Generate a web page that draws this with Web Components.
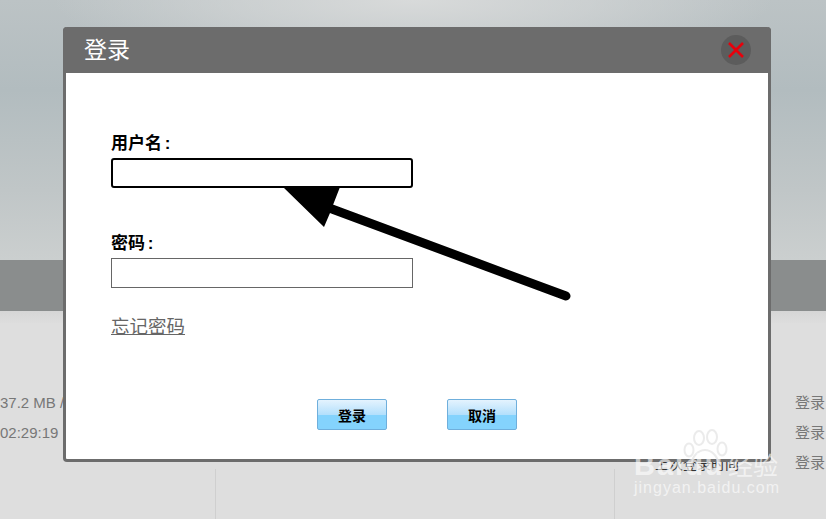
<!DOCTYPE html>
<html>
<head>
<meta charset="utf-8">
<title>登录</title>
<style>
  html, body { margin: 0; height: 100%; overflow: hidden; }
  body { font-family: "Liberation Sans", "Noto Sans CJK SC", sans-serif; }
</style>
</head>
<body>
<status-page>
  <login-dialog heading="登录"></login-dialog>
  <pointer-arrow></pointer-arrow>
  <baidu-mark></baidu-mark>
</status-page>

<template id="status-page-tpl">
  <style>
    :host { display: block; position: relative; width: 826px; height: 519px; overflow: hidden; background: #dedede; }
    .top { height: 260px; background: radial-gradient(ellipse 360px 70px at 50% 0, #d8dada 0%, rgba(216,218,218,.55) 50%, rgba(216,218,218,0) 100%), linear-gradient(#bcc3c5 0, #b2bcbf 90px, #c0c6c7 190px, #cbcfcf 260px); }
    .band { height: 51px; background: #8a8d8d; }
    .fade { height: 12px; background: linear-gradient(#d6d6d6, #dddddd); }
    .rows { display: grid; grid-template-columns: 215px 399px 1fr; height: 146px; font-size: 15px; color: #777; }
    .rows > div { display: flex; flex-direction: column; gap: 14px; padding-top: 72px; }
    .rows span { line-height: 16px; white-space: nowrap; }
    .right { padding-left: 181px; }
    .cols { display: grid; grid-template-columns: 215px 399px 1fr; height: 60px; }
    .cols div + div { border-left: 1px solid #cfcfcf; }
    .clip { position: absolute; left: 655px; top: 453px; font-size: 14px; color: #333; white-space: nowrap; }
  </style>
  <div class="top"></div>
  <div class="band"></div>
  <div class="fade"></div>
  <div class="rows">
    <div><span>37.2 MB / 128 MB</span><span>02:29:19</span></div>
    <div></div>
    <div class="right"><span>登录</span><span>登录</span><span>登录</span></div>
  </div>
  <div class="cols"><div></div><div></div><div></div></div>
  <div class="clip">上次登录时间</div>
  <slot></slot>
</template>

<template id="login-dialog-tpl">
  <style>
    :host { display: block; position: absolute; left: 63px; top: 27px; width: 708px; height: 435px; box-sizing: border-box; background: #fff; border: 3px solid #6c6c6c; border-top: 0; border-radius: 4px; }
    header { display: flex; align-items: center; justify-content: space-between; height: 46px; margin: 0 -3px; padding: 0 20px 0 21px; background: #6c6c6c; border-radius: 4px 4px 0 0; color: #fff; font-size: 23px; }
    header span { line-height: 30px; margin-top: -1px; }
    .close { width: 30px; height: 30px; border-radius: 50%; background: #5c5c5c; display: flex; align-items: center; justify-content: center; }
    main { display: flex; flex-direction: column; padding: 59px 0 0 45px; }
    label { font-size: 17px; font-weight: bold; word-spacing: -2px; color: #000; line-height: 24px; height: 26px; }
    .box { display: block; width: 302px; height: 30px; box-sizing: border-box; margin-bottom: 29px; background: #fff; border: 1px solid #666; }
    .box.focus { border: 2px solid #000; border-radius: 3px; margin-bottom: 44px; }
    a { font-size: 18.5px; color: #666; text-decoration: underline; line-height: 24px; margin-top: -2px; align-self: flex-start; }
    footer { display: flex; justify-content: center; gap: 60px; margin: 60px 0 0 -45px; }
  </style>
  <header><span></span><div class="close">
    <svg width="18" height="18" viewBox="0 0 18 18"><path d="M2 2 16 16M16 2 2 16" stroke="#e8000b" stroke-width="2.6" fill="none"/></svg>
  </div></header>
  <main>
    <label>用户名 :</label>
    <div class="box focus"></div>
    <label>密码 :</label>
    <div class="box"></div>
    <a href="#">忘记密码</a>
    <footer>
      <blue-button>登录</blue-button>
      <blue-button>取消</blue-button>
    </footer>
  </main>
</template>

<template id="blue-button-tpl">
  <style>
    :host { display: inline-flex; align-items: center; justify-content: center; box-sizing: border-box; width: 70px; height: 31px; border: 1px solid #6fafdc; border-radius: 2px; background: linear-gradient(#e4f3fe 0%, #b4e0fc 50%, #84d3fd 52%, #84d3fd 100%); font-size: 14px; font-weight: bold; color: #000; }
  </style>
  <slot></slot>
</template>

<template id="pointer-arrow-tpl">
  <style>
    :host { display: block; position: absolute; left: 0; top: 0; width: 826px; height: 519px; pointer-events: none; }
    svg { display: block; }
  </style>
  <svg width="826" height="519" viewBox="0 0 826 519">
    <path d="M566 296 L332 209" stroke="#000" stroke-width="9" stroke-linecap="round" fill="none"/>
    <path d="M283 187 L340 187 L333 205 L330 213 L324 227 Z" fill="#000"/>
  </svg>
</template>

<template id="baidu-mark-tpl">
  <style>
    :host { display: block; position: absolute; left: 634px; top: 428px; width: 150px; height: 75px; color: rgba(255,255,255,.62); pointer-events: none; }
    svg { position: absolute; left: 48px; top: 0; color: rgba(222,222,222,.6); }
    .logo { position: absolute; left: 0; top: 21px; font-size: 29px; font-weight: bold; letter-spacing: 2px; line-height: 33px; }
    .cn { position: absolute; left: 94px; top: 23px; font-size: 25px; line-height: 30px; }
    .url { position: absolute; left: 0; top: 50px; font-size: 16px; letter-spacing: 1px; line-height: 20px; white-space: nowrap; }
  </style>
  <svg width="50" height="50" viewBox="0 0 50 50" fill="none" stroke="currentColor" stroke-width="2">
    <ellipse cx="17" cy="10" rx="5" ry="7"/>
    <ellipse cx="30" cy="9" rx="5" ry="7"/>
    <ellipse cx="7" cy="22" rx="4.5" ry="6.5"/>
    <ellipse cx="40" cy="21" rx="4.5" ry="6.5"/>
    <path d="M23 22c-7 0-13 7-13 13 0 7 8 6 13 5 6 1 13 2 13-5 0-6-6-13-13-13z"/>
  </svg>
  <div class="logo">Baidu</div>
  <div class="cn">经验</div>
  <div class="url">jingyan.baidu.com</div>
</template>

<script>
class StatusPage extends HTMLElement {
  constructor() {
    super();
    this.attachShadow({ mode: 'open' }).appendChild(document.getElementById('status-page-tpl').content.cloneNode(true));
  }
}
class LoginDialog extends HTMLElement {
  constructor() {
    super();
    this.attachShadow({ mode: 'open' }).appendChild(document.getElementById('login-dialog-tpl').content.cloneNode(true));
  }
  connectedCallback() {
    this.shadowRoot.querySelector('header span').textContent = this.getAttribute('heading');
  }
}
class BlueButton extends HTMLElement {
  constructor() {
    super();
    this.attachShadow({ mode: 'open' }).appendChild(document.getElementById('blue-button-tpl').content.cloneNode(true));
  }
}
class PointerArrow extends HTMLElement {
  constructor() {
    super();
    this.attachShadow({ mode: 'open' }).appendChild(document.getElementById('pointer-arrow-tpl').content.cloneNode(true));
  }
}
class BaiduMark extends HTMLElement {
  constructor() {
    super();
    this.attachShadow({ mode: 'open' }).appendChild(document.getElementById('baidu-mark-tpl').content.cloneNode(true));
  }
}
customElements.define('blue-button', BlueButton);
customElements.define('login-dialog', LoginDialog);
customElements.define('pointer-arrow', PointerArrow);
customElements.define('baidu-mark', BaiduMark);
customElements.define('status-page', StatusPage);
</script>
</body>
</html>
